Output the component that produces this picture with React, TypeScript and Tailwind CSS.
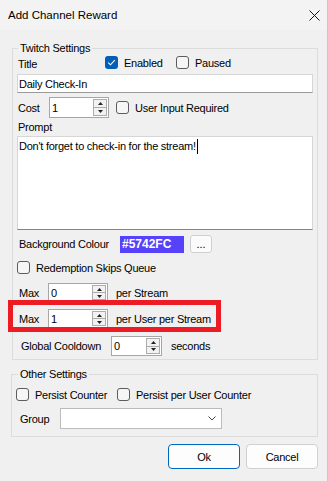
function Check({ checked }: { checked?: boolean }) {
  if (checked) {
    return (
      <span className="w-[13px] h-[13px] rounded-[3px] bg-[#005fb8] flex items-center justify-center shrink-0">
        <svg width="9" height="7" viewBox="0 0 9 7">
          <path d="M1.2 3.6 L3.5 5.8 L7.8 1.2" stroke="white" fill="none" strokeWidth="1.1" />
        </svg>
      </span>
    );
  }
  return <span className="block w-[13px] h-[13px] rounded-[3px] border border-[#5c5c5c] bg-[#f6f6f6] shrink-0" />;
}

function Spin({ value, className }: { value: string; className: string }) {
  return (
    <div className={`flex border border-[#a6a6a6] bg-white ${className}`}>
      <span className="flex-1 pl-[2px] flex items-center">{value}</span>
      <div className="w-[14px] flex flex-col my-[1px] mr-[1px]">
        <span className="flex-1 border border-[#acacac] bg-[#f2f2f2] flex items-center justify-center">
          <svg width="5" height="3" viewBox="0 0 5 3">
            <path d="M0 3 H5 L2.5 0 Z" fill="#222" />
          </svg>
        </span>
        <span className="flex-1 border border-t-0 border-[#acacac] bg-[#f2f2f2] flex items-center justify-center">
          <svg width="5" height="3" viewBox="0 0 5 3">
            <path d="M0 0 H5 L2.5 3 Z" fill="#222" />
          </svg>
        </span>
      </div>
    </div>
  );
}

export default function App() {
  return (
    <div className="w-[328px] h-[481px] bg-[#f0f0f0] flex flex-col text-[11px] leading-[14px] tracking-[-0.25px] text-black border-r border-[#c8c8c8] font-['Liberation_Sans',Arial,sans-serif]">
      {/* title bar */}
      <div className="h-[30px] bg-[#f3f3f3] flex items-center justify-between pl-[8px] pr-[7px]">
        <span className="text-[11.5px] tracking-normal">Add Channel Reward</span>
        <svg width="11" height="11" viewBox="0 0 11 11">
          <path d="M0.5 0.5 L10.5 10.5 M10.5 0.5 L0.5 10.5" stroke="#111" strokeWidth="1" />
        </svg>
      </div>

      <div className="flex flex-col pl-[11px] pr-[9px]">
        {/* Twitch Settings */}
        <fieldset className="mt-[11px] ml-[1px] border border-[#dcdcdc] px-[4px] pb-[3px]">
          <legend className="ml-[1px] px-[2px] leading-[14px]">Twitch Settings</legend>

          <div className="flex h-[19px]">
            <span className="w-[88px] pl-[1px] pt-[2px]">Title</span>
            <div className="flex items-center h-[13px] mt-[1px] w-[71px]">
              <Check checked />
              <span className="ml-[6px]">Enabled</span>
            </div>
            <div className="flex items-center h-[13px] mt-[1px]">
              <Check />
              <span className="ml-[6px]">Paused</span>
            </div>
          </div>

          <div className="h-[19px] border border-[#d6d6d6] border-b-[#9a9a9a] bg-white pl-[1px] flex items-center">
            Daily Check-In
          </div>

          <div className="mt-[4px] h-[21px] flex items-center">
            <span className="w-[32px] pl-[1px]">Cost</span>
            <Spin value="1" className="w-[60px] h-[21px]" />
            <div className="ml-[7px] flex items-center">
              <Check />
              <span className="ml-[6px]">User Input Required</span>
            </div>
          </div>

          <div className="mt-[2px] pl-[1px]">Prompt</div>
          <div className="mt-[2px] h-[94px] border border-[#d6d6d6] border-b-[#5b8cc4] bg-white px-[1px] pt-[2px] flex items-start">
            <span>Don't forget to check-in for the stream!</span>
            <span className="ml-[1px] w-[1px] h-[15px] bg-black" />
          </div>

          <div className="mt-[5px] h-[18px] flex items-center">
            <span className="w-[103px] pl-[2px]">Background Colour</span>
            <span className="w-[64px] h-[17px] bg-[#5742fc] text-white font-bold text-[12px] tracking-normal pl-[2px] flex items-center">
              #5742FC
            </span>
            <span className="ml-[6px] w-[22px] h-[18px] border border-[#d0d0d0] rounded-[3px] bg-[#fbfbfb] flex items-end justify-center pb-[1px] tracking-normal">
              ...
            </span>
          </div>

          <div className="mt-[8px] h-[13px] flex items-center">
            <Check />
            <span className="ml-[6px]">Redemption Skips Queue</span>
          </div>

          <div className="mt-[9px] h-[19px] flex items-center">
            <span className="w-[31px] pl-[2px]">Max</span>
            <Spin value="0" className="w-[60px] h-[19px]" />
            <span className="ml-[8px]">per Stream</span>
          </div>

          <div className="relative mt-[7px] h-[19px] flex items-center">
            <span className="w-[31px] pl-[2px]">Max</span>
            <Spin value="1" className="w-[60px] h-[19px]" />
            <span className="ml-[8px]">per User per Stream</span>
            <div className="absolute left-[-9px] top-[-9px] w-[213px] h-[32px] border-[5px] border-[#ed1c24] pointer-events-none" />
          </div>

          <div className="mt-[8px] h-[20px] flex items-center">
            <span className="w-[94px] pl-[4px]">Global Cooldown</span>
            <Spin value="0" className="w-[51px] h-[20px]" />
            <span className="ml-[9px]">seconds</span>
          </div>
        </fieldset>

        {/* Other Settings */}
        <fieldset className="mt-[7px] border border-[#dcdcdc] px-[4px] pb-[7px]">
          <legend className="ml-[2px] px-[2px] leading-[14px]">Other Settings</legend>

          <div className="mt-[7px] h-[13px] flex items-center">
            <div className="w-[101px] flex items-center">
              <Check />
              <span className="ml-[6px]">Persist Counter</span>
            </div>
            <Check />
            <span className="ml-[6px]">Persist per User Counter</span>
          </div>

          <div className="mt-[7px] h-[21px] flex items-center">
            <span className="w-[44px] pl-[4px]">Group</span>
            <div className="w-[162px] h-[21px] border border-[#bcbcbc] bg-white flex items-center justify-end pr-[5px]">
              <svg width="8" height="5" viewBox="0 0 8 5">
                <path d="M0.5 0.5 L4 4 L7.5 0.5" stroke="#444" fill="none" strokeWidth="1" />
              </svg>
            </div>
          </div>
        </fieldset>

        <div className="mt-[7px] flex justify-end gap-[6px]">
          <button className="w-[72px] h-[25px] rounded-[4px] border border-[#0067c0] bg-[#fdfdfd] text-[11px] tracking-[-0.25px]">
            Ok
          </button>
          <button className="w-[72px] h-[25px] rounded-[4px] border border-[#d0d0d0] bg-[#fdfdfd] text-[11px] tracking-[-0.25px]">
            Cancel
          </button>
        </div>
      </div>
    </div>
  );
}
